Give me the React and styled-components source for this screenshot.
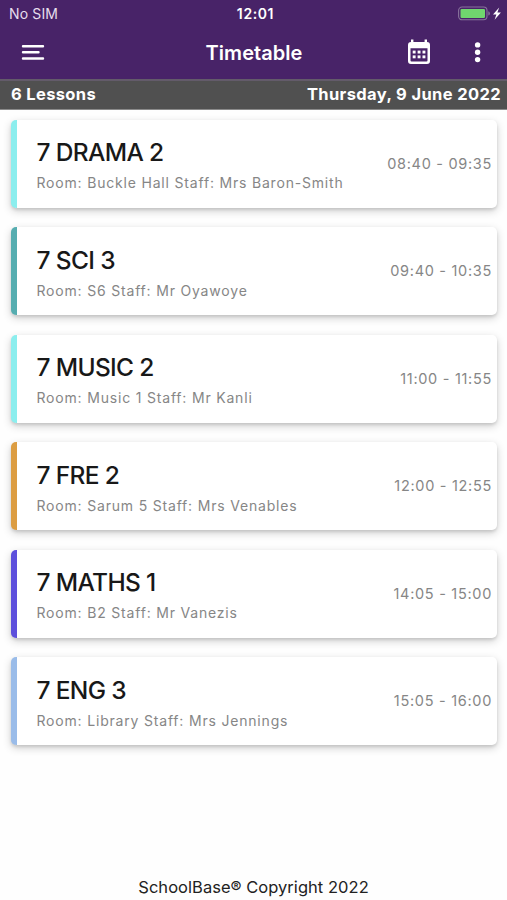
import React from 'react';
import styled, { createGlobalStyle } from 'styled-components';

const GlobalStyle = createGlobalStyle`
    * {
        box-sizing: border-box;
    }
    body {
        margin: 0;
        background-color: #fff;
        font-family: Inter, "Liberation Sans", sans-serif;
    }
    h1, h2, p {
        margin: 0;
    }
`;

const Screen = styled.div`
    display: flex;
    flex-direction: column;
    width: 100%;
    height: 900px;
    background-color: #fefefe;
    white-space: nowrap;
    overflow: hidden;
`;

const Header = styled.header`
    height: 79px;
    color: #fff;
    background-color: #482368;
`;

const StatusBar = styled.div`
    display: grid;
    grid-template-columns: 1fr auto 1fr;
    align-items: center;
    height: 27px;
    padding: 0 5px 0 9px;
    font-size: 14px;
    line-height: 27px;
`;

const Carrier = styled.span`
    color: #e6deec;
    letter-spacing: 0.15px;
`;

const Clock = styled.span`
    font-weight: 600;
    letter-spacing: 0.6px;
`;

const Battery = styled.svg`
    justify-self: end;
    width: 44px;
    height: 16px;
`;

const NavBar = styled.div`
    display: grid;
    grid-template-columns: 1fr auto 1fr;
    align-items: center;
    height: 52px;
    padding: 0 15px 0 21px;
`;

const IconButton = styled.button`
    display: flex;
    padding: 0;
    border: 0;
    color: #fff;
    background: none;
`;

const Title = styled.h1`
    margin-right: 5px;
    font-size: 20px;
    font-weight: 600;
    line-height: 50px;
    letter-spacing: 0.05px;
`;

const Actions = styled.div`
    display: flex;
    align-items: center;
    justify-content: flex-end;
    gap: 31px;
    padding-bottom: 2px;
`;

const DayBar = styled.div`
    display: flex;
    justify-content: space-between;
    height: 31px;
    padding: 0 6px 0 11px;
    border-top: 2px solid #635b6a;
    border-bottom: 1px solid #8a8a8a;
    color: #fff;
    background-color: #505050;
    font-size: 16.5px;
    font-weight: 700;
    line-height: 27px;
`;

const DayText = styled.span`
    letter-spacing: ${props => props.$spacing};
`;

const LessonList = styled.ul`
    display: flex;
    flex: 1;
    flex-direction: column;
    gap: 19.5px;
    margin: 0;
    padding: 9.5px 10px 0 11px;
    list-style: none;
`;

const LessonCard = styled.li`
    display: flex;
    align-items: center;
    justify-content: space-between;
    height: 88px;
    padding: 0 5px 0 19.5px;
    border-left: 6px solid ${props => props.$color};
    border-radius: 5px;
    background-color: #fff;
    box-shadow: 0 3px 9px rgba(0, 0, 0, 0.19), 0 2px 3px rgba(0, 0, 0, 0.1);
`;

const LessonText = styled.div`
    padding-top: 4.5px;
`;

const LessonName = styled.h2`
    color: #181818;
    font-size: 24.5px;
    font-weight: 450;
    line-height: 29px;
    letter-spacing: -0.65px;
`;

const LessonInfo = styled.p`
    margin-top: 6px;
    color: #868686;
    font-size: 14px;
    line-height: 20px;
    letter-spacing: 0.81px;
`;

const LessonTime = styled.span`
    color: #868686;
    font-size: 14.5px;
    font-kerning: none;
    line-height: 20px;
    letter-spacing: 0.7px;
`;

const Footer = styled.footer`
    height: 25px;
    color: #222;
    font-size: 16.5px;
    line-height: 25px;
    letter-spacing: 0.04px;
    text-align: center;
`;

const lessons = [
    { name: '7 DRAMA 2', room: 'Buckle Hall', staff: 'Mrs Baron-Smith', time: '08:40 - 09:35', color: '#8ceeee' },
    { name: '7 SCI 3', room: 'S6', staff: 'Mr Oyawoye', time: '09:40 - 10:35', color: '#56adb0' },
    { name: '7 MUSIC 2', room: 'Music 1', staff: 'Mr Kanli', time: '11:00 - 11:55', color: '#8ceeee' },
    { name: '7 FRE 2', room: 'Sarum 5', staff: 'Mrs Venables', time: '12:00 - 12:55', color: '#dc9d42' },
    { name: '7 MATHS 1', room: 'B2', staff: 'Mr Vanezis', time: '14:05 - 15:00', color: '#5d50dc' },
    { name: '7 ENG 3', room: 'Library', staff: 'Mrs Jennings', time: '15:05 - 16:00', color: '#9abce9' },
];

const MenuIcon = () => (
    <svg width="24" height="20" viewBox="0 0 24 20" fill="none" stroke="currentColor" strokeWidth="2.4" strokeLinecap="round">
        <path d="M2 3.3h20M2 9.3h15.5M2 15.5h20" />
    </svg>
);

const CalendarIcon = () => (
    <svg width="24" height="26" viewBox="0 0 24 26" fill="currentColor">
        <path fillRule="evenodd" d="M4 .6h2.4v2.4h11.2V.6H20v2.4a3 3 0 0 1 3 3v16a3 3 0 0 1-3 3H4a3 3 0 0 1-3-3V6a3 3 0 0 1 3-3ZM3.5 9.2v12.3a1 1 0 0 0 1 1h15a1 1 0 0 0 1-1V9.2Z" />
        {[11.6, 16.4].map(y => [5.7, 10.6, 15.5].map(x => (
            <rect key={`${x}-${y}`} x={x} y={y} width="2.9" height="2.9" />
        )))}
    </svg>
);

const MoreIcon = () => (
    <svg width="30" height="24" viewBox="0 0 30 24" fill="currentColor">
        <circle cx="15.6" cy="4.9" r="2.7" />
        <circle cx="15.6" cy="12.3" r="2.7" />
        <circle cx="15.6" cy="19.6" r="2.7" />
    </svg>
);

export default () => (
    <Screen>
        <GlobalStyle />
        <Header>
            <StatusBar>
                <Carrier>No SIM</Carrier>
                <Clock>12:01</Clock>
                <Battery viewBox="0 0 44 16">
                    <rect x=".6" y="1" width="28.4" height="12.8" rx="3.5" fill="none" stroke="#88739c" strokeWidth="1.1" />
                    <rect x="2.5" y="2.9" width="24.5" height="9" rx="1.2" fill="#70d66e" />
                    <path d="M30.3 5.2q1.6.4 1.6 2.2t-1.6 2.2Z" fill="#88739c" />
                    <path d="M41.2 1.5 35 8.4h3.4l-1.8 5.4 6.3-7.2h-3.5Z" fill="#fff" />
                </Battery>
            </StatusBar>
            <NavBar>
                <IconButton aria-label="Menu"><MenuIcon /></IconButton>
                <Title>Timetable</Title>
                <Actions>
                    <IconButton aria-label="Calendar"><CalendarIcon /></IconButton>
                    <IconButton aria-label="More"><MoreIcon /></IconButton>
                </Actions>
            </NavBar>
        </Header>
        <DayBar>
            <DayText $spacing="0.35px">6 Lessons</DayText>
            <DayText $spacing="0.37px">Thursday, 9 June 2022</DayText>
        </DayBar>
        <LessonList>
            {lessons.map(e => (
                <LessonCard key={e.name} $color={e.color}>
                    <LessonText>
                        <LessonName>{e.name}</LessonName>
                        <LessonInfo>Room: {e.room} Staff: {e.staff}</LessonInfo>
                    </LessonText>
                    <LessonTime>{e.time}</LessonTime>
                </LessonCard>
            ))}
        </LessonList>
        <Footer>SchoolBase® Copyright 2022</Footer>
    </Screen>
);
